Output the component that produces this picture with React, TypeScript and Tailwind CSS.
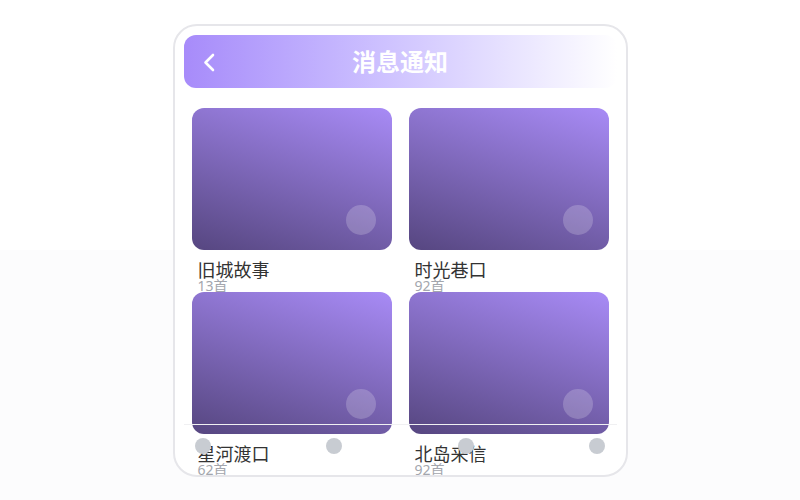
import React from 'react'

const albums = [
    { title: '旧城故事', count: '13首' },
    { title: '时光巷口', count: '92首' },
    { title: '星河渡口', count: '62首' },
    { title: '北岛来信', count: '92首' },
]

function BackIcon() {
    return (
        <svg width="12" height="19" viewBox="0 0 12 19" fill="none">
            <path d="M10 2 L2.5 9.5 L10 17" stroke="white" strokeWidth="2.6" strokeLinecap="round" strokeLinejoin="round" />
        </svg>
    )
}

function AlbumCard({ title, count }: { title: string; count: string }) {
    return (
        <div className="flex flex-col h-[184px]">
            <div className="h-[142px] shrink-0 rounded-[12px] bg-[linear-gradient(198deg,#a88bf6,#564680)] flex items-end justify-end pr-[16px] pb-[15px]">
                <div className="w-[30px] h-[30px] rounded-full bg-white/20" />
            </div>
            <div className="pl-[6px] mt-[11px] text-[18px] leading-[18px] text-[#333333]">{title}</div>
            <div className="pl-[6px] text-[14px] leading-[14px] text-[#a3a6ad]">{count}</div>
        </div>
    )
}

export default function App() {
    return (
        <div
            className="w-[800px] h-[500px] flex justify-center pt-[24px] bg-[linear-gradient(to_bottom,#ffffff_250px,#fcfcfd_250px)]"
            style={{ fontFamily: '"Noto Sans", "Noto Sans CJK SC", sans-serif' }}
        >
            <div className="relative w-[455px] h-[453px] rounded-[24px] border-2 border-[#e6e6ea] bg-white p-[9px] overflow-hidden">
                {/* header */}
                <div className="h-[53px] rounded-[12px] bg-linear-to-r from-[#a78bfa] to-white grid grid-cols-[60px_1fr_60px] items-center">
                    <div className="pl-[19px] pt-[2px] flex items-center">
                        <BackIcon />
                    </div>
                    <div className="text-center text-white text-[24px] leading-none font-bold">消息通知</div>
                    <div />
                </div>

                {/* grid */}
                <div className="mt-[20px] px-[8px] grid grid-cols-2 gap-x-[17px]">
                    {albums.map(a => (
                        <AlbumCard key={a.title} title={a.title} count={a.count} />
                    ))}
                </div>

                {/* tab bar */}
                <div className="absolute left-[9px] right-[9px] bottom-[9px] h-[42px] border-t border-[#f0f0f2] flex justify-between px-[11px] pt-[13px]">
                    {[0, 1, 2, 3].map(i => (
                        <div key={i} className="w-[16px] h-[16px] rounded-full bg-[#c8ccd2]" />
                    ))}
                </div>
            </div>
        </div>
    )
}
